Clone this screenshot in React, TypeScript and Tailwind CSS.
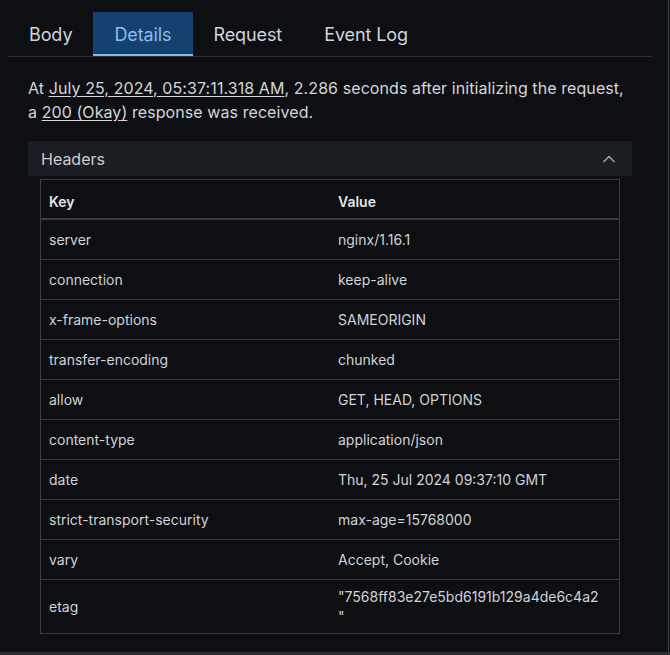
import { ChevronUp } from 'lucide-react';

const headers = [
  { key: 'server', value: 'nginx/1.16.1' },
  { key: 'connection', value: 'keep-alive' },
  { key: 'x-frame-options', value: 'SAMEORIGIN' },
  { key: 'transfer-encoding', value: 'chunked' },
  { key: 'allow', value: 'GET, HEAD, OPTIONS' },
  { key: 'content-type', value: 'application/json' },
  { key: 'date', value: 'Thu, 25 Jul 2024 09:37:10 GMT' },
  { key: 'strict-transport-security', value: 'max-age=15768000' },
  { key: 'vary', value: 'Accept, Cookie' },
  { key: 'etag', value: '"7568ff83e27e5bd6191b129a4de6c4a2\n"' },
];

const tabs = ['Body', 'Details', 'Request', 'Event Log'];

export default function App() {
  return (
    <div className="w-[670px] h-[655px] flex flex-col bg-[#0d0f12] overflow-hidden">
      <div className="flex h-[652px]">
        {/* Main */}
        <div className="flex-1 pl-2 pr-4">
          <div className="flex mt-3 border-b border-[#2c2f34] font-['Inter',sans-serif] text-[18px] tracking-[-0.1px]">
            {tabs.map((tab) => {
              const active = tab === 'Details';
              return (
                <div
                  key={tab}
                  className={
                    active
                      ? 'h-[44px] px-[21px] flex items-center bg-[#134270] text-[#8fbbe9] border-b-2 border-[#86b6ea] pt-[2px]'
                      : 'h-[44px] px-[21px] flex items-center text-[#d2d5da] border-b-2 border-transparent pt-[2px]'
                  }
                >
                  {tab}
                </div>
              );
            })}
          </div>

          <div className="px-5">
            <p className="mt-[19px] mr-2 font-['Inter',sans-serif] text-[16px] leading-6 tracking-[0.08px] text-[#d3d6db]">
              At <span className="underline underline-offset-2">July 25, 2024, 05:37:11.318 AM</span>, 2.286 seconds after
              initializing the request, a <span className="underline underline-offset-2">200 (Okay)</span> response was
              received.
            </p>

            {/* Headers accordion */}
            <div className="mt-[17px]">
              <div className="h-[35px] px-[13px] flex items-center justify-between bg-[#1a1d21] font-['Inter',sans-serif] text-[16px] text-[#c9ccd1]">
                <span>Headers</span>
                <ChevronUp size={20} strokeWidth={2} className="text-[#9aa0a7]" />
              </div>

              <div className="px-3 pt-[3px]">
                <div className="border border-[#3a3d42] font-['Inter',sans-serif] text-[14px] text-[#d0d3d8]">
                  <div className="grid grid-cols-2 h-[40px] border-b-2 border-[#3a3d42] font-semibold text-[#e2e5ea] leading-5">
                    <div className="px-2 pt-3">Key</div>
                    <div className="px-2 pt-3">Value</div>
                  </div>
                  {headers.map((h, i) => (
                    <div
                      key={h.key}
                      className={
                        i === headers.length - 1
                          ? 'grid grid-cols-2 h-[53px] items-center leading-5'
                          : 'grid grid-cols-2 h-[40px] items-center border-b border-[#3a3d42]'
                      }
                    >
                      <div className="px-2">{h.key}</div>
                      <div className="px-2 whitespace-pre-line">{h.value}</div>
                    </div>
                  ))}
                </div>
              </div>
            </div>
          </div>
        </div>

        {/* Scrollbar track */}
        <div className="w-px bg-[#3d434b]" />
        <div className="w-px" />
      </div>
      <div className="h-[3px] bg-[#2a2c2f]" />
    </div>
  );
}
